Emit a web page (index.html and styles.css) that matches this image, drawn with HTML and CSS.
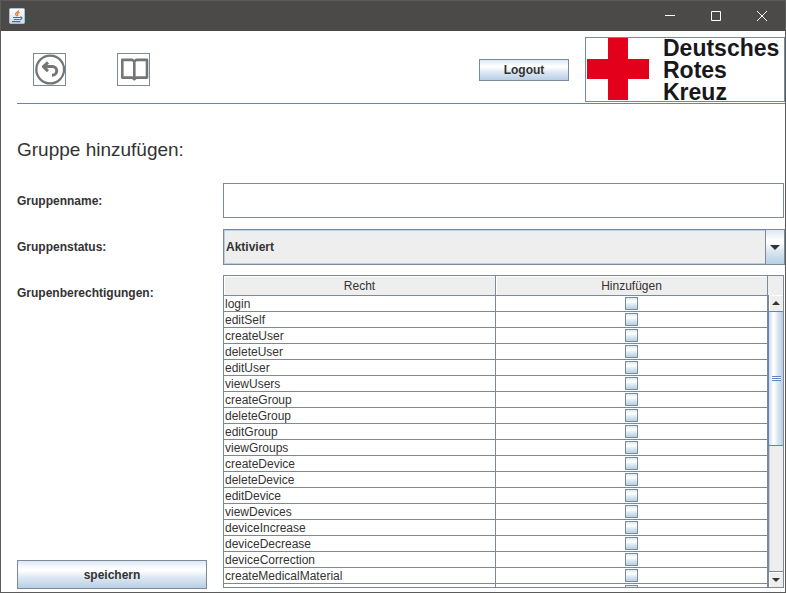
FILE: index.html
```html
<!DOCTYPE html>
<html lang="de">
<head>
<meta charset="utf-8">
<title>Gruppe hinzufügen</title>
<link rel="stylesheet" href="styles.css">
</head>
<body>
<div class="window">
  <div class="titlebar">
    <svg class="app-icon" viewBox="0 0 16 16" aria-hidden="true">
      <defs>
        <linearGradient id="tile" x1="0" y1="0" x2="0" y2="1">
          <stop offset="0" stop-color="#ffffff"/>
          <stop offset="1" stop-color="#cfdde9"/>
        </linearGradient>
      </defs>
      <rect x=".5" y=".5" width="15" height="15" rx="1" fill="url(#tile)" stroke="#a9c3d6"/>
      <path d="M9.600 2.200C9.800 4 6.200 4.600 6.600 6.200c.1.800.9 1.200 1 2M10.600 4.400C9 5 8 5.600 8.600 6.600c.4.700.4 1.100-.1 1.600" fill="none" stroke="#e8781c" stroke-width="1.200"/>
      <path d="M4 9.500h7.400M4.800 11.500h5.600M3 13.600h8.400M11.200 9.200c2.300-.5 2.400 1.800-.4 2.500" fill="none" stroke="#41708f" stroke-width="1.200"/>
    </svg>
    <div class="window-buttons">
      <button type="button" aria-label="Minimieren"><svg viewBox="0 0 12 12"><path d="M1 5.500h10"/></svg></button>
      <button type="button" aria-label="Maximieren"><svg viewBox="0 0 12 12"><path d="M1.500 1.500h9v9h-9z"/></svg></button>
      <button type="button" aria-label="Schließen"><svg viewBox="0 0 12 12"><path d="M1 1l10 10M11 1L1 11"/></svg></button>
    </div>
  </div>

  <header class="toolbar">
    <div class="nav">
      <button type="button" class="icon-button" aria-label="Zurück">
        <svg viewBox="0 0 31 31">
          <circle cx="16.200" cy="15.500" r="13.900" stroke-width="2.300"/>
          <path d="M10 12.500h8.400a4.350 4.350 0 0 1 0 8.700h-.4" stroke-width="3"/>
          <path d="M14 8.300L9.400 12.700L14 17.100" stroke-width="3"/>
        </svg>
      </button>
      <button type="button" class="icon-button" aria-label="Handbuch">
        <svg viewBox="0 0 31 31">
          <path d="M16.300 7.400L14.500 5.900H4.300V23.600H14.300L16.300 25.200L18.300 23.600H29V5.900H18.100zM16.300 7.400V25" stroke-width="2.600"/>
        </svg>
      </button>
    </div>
    <button type="button" class="button logout">Logout</button>
    <div class="logo">
      <svg viewBox="0 0 62 63" aria-hidden="true"><path d="M21 0h20v21h21v20H41v21H21V41H0V21h21z" fill="#e2001a"/></svg>
      <div class="logo-text">Deutsches<br>Rotes<br>Kreuz</div>
    </div>
  </header>

  <main class="content">
    <h1>Gruppe hinzufügen:</h1>
    <form class="form">
      <label for="name">Gruppenname:</label>
      <input id="name" class="text-field" type="text">

      <label for="status">Gruppenstatus:</label>
      <div class="combo">
        <select id="status">
          <option>Aktiviert</option>
          <option>Deaktiviert</option>
        </select>
        <span class="combo-arrow" aria-hidden="true"><svg class="arrow" viewBox="0 0 10 5"><path d="M0 0h10L5 5z"/></svg></span>
      </div>

      <div class="side">
        <span id="rights-label" class="side-label">Grupenberechtigungen:</span>
        <button type="submit" class="button save">speichern</button>
      </div>
      <div class="rights">
        <div class="viewport">
          <table aria-labelledby="rights-label">
            <thead><tr><th>Recht</th><th>Hinzufügen</th></tr></thead>
            <tbody>
              <tr><td><label for="r1">login</label></td><td><input type="checkbox" id="r1"></td></tr>
              <tr><td><label for="r2">editSelf</label></td><td><input type="checkbox" id="r2"></td></tr>
              <tr><td><label for="r3">createUser</label></td><td><input type="checkbox" id="r3"></td></tr>
              <tr><td><label for="r4">deleteUser</label></td><td><input type="checkbox" id="r4"></td></tr>
              <tr><td><label for="r5">editUser</label></td><td><input type="checkbox" id="r5"></td></tr>
              <tr><td><label for="r6">viewUsers</label></td><td><input type="checkbox" id="r6"></td></tr>
              <tr><td><label for="r7">createGroup</label></td><td><input type="checkbox" id="r7"></td></tr>
              <tr><td><label for="r8">deleteGroup</label></td><td><input type="checkbox" id="r8"></td></tr>
              <tr><td><label for="r9">editGroup</label></td><td><input type="checkbox" id="r9"></td></tr>
              <tr><td><label for="r10">viewGroups</label></td><td><input type="checkbox" id="r10"></td></tr>
              <tr><td><label for="r11">createDevice</label></td><td><input type="checkbox" id="r11"></td></tr>
              <tr><td><label for="r12">deleteDevice</label></td><td><input type="checkbox" id="r12"></td></tr>
              <tr><td><label for="r13">editDevice</label></td><td><input type="checkbox" id="r13"></td></tr>
              <tr><td><label for="r14">viewDevices</label></td><td><input type="checkbox" id="r14"></td></tr>
              <tr><td><label for="r15">deviceIncrease</label></td><td><input type="checkbox" id="r15"></td></tr>
              <tr><td><label for="r16">deviceDecrease</label></td><td><input type="checkbox" id="r16"></td></tr>
              <tr><td><label for="r17">deviceCorrection</label></td><td><input type="checkbox" id="r17"></td></tr>
              <tr><td><label for="r18">createMedicalMaterial</label></td><td><input type="checkbox" id="r18"></td></tr>
              <tr><td></td><td><input type="checkbox" aria-label="Weiteres Recht"></td></tr>
            </tbody>
          </table>
        </div>
        <div class="scroll" aria-hidden="true">
          <div class="corner"></div>
          <div class="scroll-button"><svg class="arrow" viewBox="0 0 10 5"><path d="M0 5h10L5 0z"/></svg></div>
          <div class="track"><div class="thumb"><span class="grip"></span></div></div>
          <div class="scroll-button down"><svg class="arrow" viewBox="0 0 10 5"><path d="M0 0h10L5 5z"/></svg></div>
        </div>
      </div>
    </form>
  </main>
</div>
</body>
</html>
```
FILE: styles.css
```css
:root {
  --line: #7a8a99;
  --blue: #6382bf;
  --pale: #b8cfe5;
  --panel: #eeeeee;
  --ink: #333333;
  --metal: linear-gradient(#dde8f3 0%, #ffffff 30%, #ffffff 36%, #dde8f3 60%, #b8cfe5 100%);
}

* { box-sizing: border-box; }

body {
  margin: 0;
  color: var(--ink);
  font: 12px/16px "Liberation Sans", Arial, sans-serif;
}

button, input, select { font: inherit; color: inherit; margin: 0; }

.window {
  display: flex;
  flex-direction: column;
  height: 100vh;
  border: 1px solid #5b5b5b;
  background: #fff;
}

.titlebar {
  display: flex;
  flex: none;
  align-items: center;
  justify-content: space-between;
  height: 30px;
  padding-left: 8px;
  background: #4c4a48;
}

.app-icon { width: 16px; height: 16px; }

.window-buttons { display: flex; height: 100%; }

.window-buttons button {
  display: flex;
  align-items: center;
  justify-content: center;
  width: 46px;
  padding: 0;
  border: 0;
  background: none;
}

.window-buttons svg {
  width: 12px;
  height: 12px;
  fill: none;
  stroke: #fff;
}

.toolbar {
  display: flex;
  flex: none;
  align-items: center;
  margin-left: 16px;
  padding: 6px 0 1px 16px;
  border-bottom: 1px solid var(--blue);
}

.nav { display: flex; flex: 1; gap: 51px; }

.icon-button {
  width: 33px;
  height: 33px;
  padding: 0;
  border: 1px solid var(--line);
  background: #fff;
}

.icon-button svg {
  display: block;
  width: 31px;
  height: 31px;
  fill: none;
  stroke: #757575;
  stroke-linecap: butt;
  stroke-linejoin: round;
}

.button {
  padding: 0;
  border: 1px solid var(--line);
  background: var(--metal);
  font-weight: bold;
}

.logout { width: 90px; height: 22px; margin-right: 16px; }

.logo {
  display: flex;
  align-items: center;
  width: 200px;
  height: 65px;
  padding-left: 1px;
  border: 1px solid var(--line);
}

.logo svg { flex: none; width: 62px; height: 63px; }

.logo-text {
  margin-left: 14px;
  color: #1a171b;
  font-size: 23px;
  font-weight: bold;
  line-height: 22px;
  white-space: nowrap;
}

.content {
  display: flex;
  flex: 1;
  flex-direction: column;
  min-height: 0;
  padding: 34px 0 3px 16px;
}

h1 {
  margin: 0 0 21px;
  font-size: 19px;
  font-weight: normal;
  line-height: 24px;
}

.form {
  display: grid;
  flex: 1;
  grid-template-columns: 190px 1fr;
  grid-template-rows: 36px 36px minmax(0, 1fr);
  gap: 10px 16px;
  min-height: 0;
}

.form > label { align-self: center; font-weight: bold; }

.text-field {
  width: calc(100% - 1px);
  height: 35px;
  padding: 0 3px;
  border: 1px solid var(--line);
  background: #fff;
}

.combo { position: relative; }

.combo select {
  width: 100%;
  height: 36px;
  padding: 0 20px 0 2px;
  border: 1px solid var(--line);
  border-radius: 0;
  appearance: none;
  background: var(--panel);
  box-shadow: inset 0 0 0 1px var(--pale);
  font-weight: bold;
}

.combo-arrow {
  position: absolute;
  inset: 0 0 0 auto;
  display: flex;
  align-items: center;
  justify-content: center;
  width: 20px;
  border: 1px solid var(--line);
  background: var(--metal);
  pointer-events: none;
}

.arrow { display: block; width: 10px; height: 5px; fill: var(--ink); }

.side {
  display: flex;
  flex-direction: column;
  justify-content: space-between;
}

.side-label { margin-top: 10px; font-weight: bold; }

.save { height: 29px; }

.rights {
  display: flex;
  min-height: 0;
  margin: 0 1px 1px 0;
  border: 1px solid var(--line);
}

.viewport { flex: 1; min-width: 0; overflow: hidden; }

table {
  width: 100%;
  border-collapse: separate;
  border-spacing: 0;
  table-layout: fixed;
}

th, td {
  padding: 1px 1px 0;
  border-right: 1px solid var(--line);
  border-bottom: 1px solid var(--line);
}

th {
  height: 20px;
  background: var(--panel);
  box-shadow: inset 1px 1px #fff;
  font-weight: normal;
}

td { height: 16px; line-height: 14px; vertical-align: top; }

td label { display: block; }

td input {
  display: block;
  width: 13px;
  height: 13px;
  margin: 0 auto;
  border: 1px solid var(--line);
  appearance: none;
  background: var(--metal);
}

.scroll { display: flex; flex-direction: column; width: 15px; }

.corner { height: 19px; background: var(--panel); }

.scroll-button {
  display: flex;
  align-items: center;
  justify-content: center;
  height: 16px;
  border-left: 1px solid var(--line);
  background: var(--panel);
  box-shadow: inset 1px 1px #fff;
}

.scroll-button .arrow { width: 8px; height: 4px; }

.scroll-button.down { border-top: 1px solid var(--line); }

.track {
  flex: 1;
  border-left: 1px solid var(--line);
  background: var(--panel);
  box-shadow: inset 1px 0 var(--pale);
}

.thumb {
  display: flex;
  align-items: center;
  justify-content: center;
  height: 52%;
  margin-left: -1px;
  border: solid var(--blue);
  border-width: 1px 0 1px 1px;
  background: linear-gradient(90deg, #c8daeb, #ffffff 30%, #ffffff 36%, #dde8f3 60%, #b8cfe5);
}

.grip {
  width: 9px;
  height: 5px;
  background: repeating-linear-gradient(var(--blue) 0 1px, #fff 1px 2px);
}
```
